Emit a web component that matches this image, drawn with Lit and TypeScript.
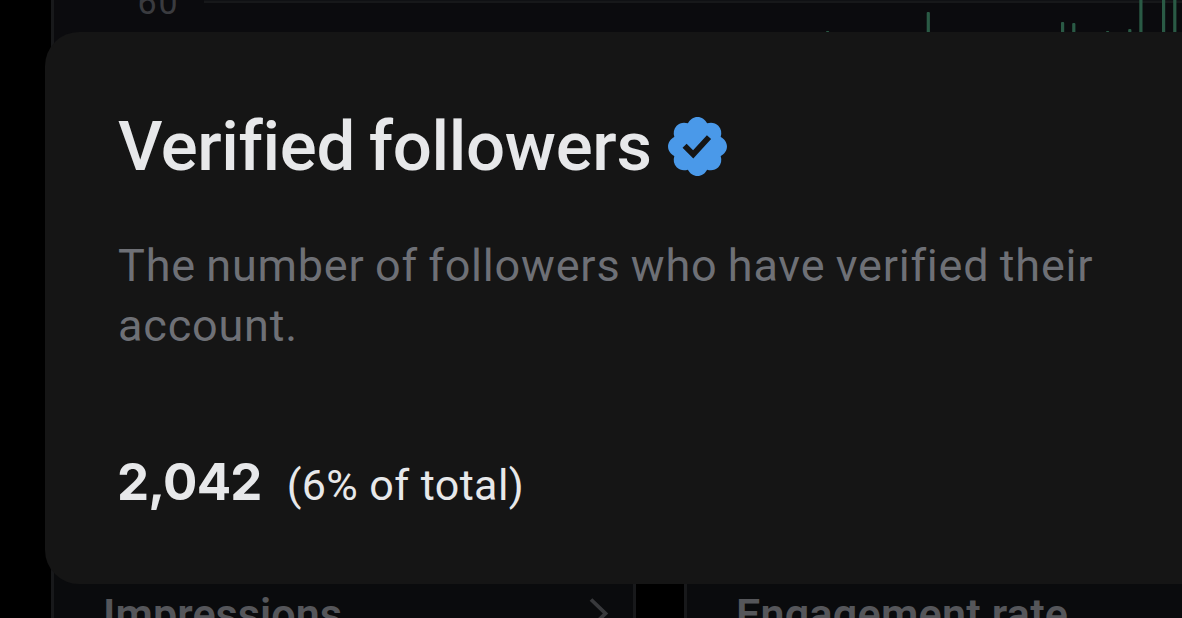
// ====== Verified Followers Card ======
// Metric explainer that sits above the dimmed analytics dashboard.

import { LitElement, html, svg, css } from 'lit';
import { customElement, property } from 'lit/decorators.js';

// x position and top of each column in the daily chart
const BARS = [
  { x: 826, top: 31 },
  { x: 926.7, top: 12 },
  { x: 1061, top: 22 },
  { x: 1072.2, top: 23 },
  { x: 1106, top: 31 },
  { x: 1128.2, top: 29 },
  { x: 1139.3, top: -2 },
  { x: 1162, top: -2 },
  { x: 1173.2, top: -2 },
];

@customElement('metric-tile')
export class MetricTile extends LitElement {
  static styles = css`
    :host {
      display: flex;
      justify-content: space-between;
      box-sizing: border-box;
      border: 3px solid #18191b;
      border-top: 0;
      border-bottom: 0;
      background: #0a0b0d;
      padding: 31px 24px 0 49px;
    }
    .label {
      font-size: 43px;
      font-weight: 600;
      line-height: 50px;
      color: #55565a;
      white-space: nowrap;
      letter-spacing: var(--label-spacing, 0.1px);
    }
    .chevron { width: 20px; height: 32px; margin-top: 9px; }
  `;

  @property({ type: String }) label = '';

  render() {
    return html`
      <span class="label">${this.label}</span>
      <svg class="chevron" viewBox="0 0 20 32" fill="none" stroke="#38393c" stroke-width="3.8">
        <path d="M2 1.5 16.5 15.5 2 29.5" />
      </svg>
    `;
  }
}

@customElement('app-root')
export class AppRoot extends LitElement {
  static styles = css`
    :host {
      display: block;
      position: relative;
      width: 1182px;
      height: 618px;
      overflow: hidden;
      background: #000;
      font-family: Roboto, "Liberation Sans", sans-serif;
    }
    .dashboard {
      display: flex;
      flex-direction: column;
      justify-content: space-between;
      width: 1320px;
      height: 618px;
      box-sizing: border-box;
      padding-left: 51px;
    }
    .chart {
      height: 300px;
      border-left: 3px solid #18191b;
      background: #0b0b0e;
    }
    .chart svg { display: block; }
    .tiles {
      display: grid;
      grid-template-columns: 585px 585px;
      column-gap: 48px;
      height: 60px;
    }
    .wide { --label-spacing: 0.25px; }
    .card {
      position: absolute;
      left: 45px;
      top: 32px;
      width: 1200px;
      height: 552px;
      box-sizing: border-box;
      padding: 74px 73px 0;
      border-radius: 34px;
      background: #151515;
      color: #e7e8ea;
    }
    .title {
      display: flex;
      align-items: center;
      gap: 11px;
      height: 80px;
      margin: 0;
      font-size: 69px;
      font-weight: 500;
      letter-spacing: -0.35px;
      word-spacing: -3px;
      white-space: nowrap;
    }
    .badge { width: 69px; height: 69px; }
    .about {
      margin: 50px 0 0;
      width: 1010px;
      font-size: 45px;
      line-height: 60px;
      letter-spacing: 0.8px;
      word-spacing: -1.6px;
      color: #6e7076;
    }
    .stat {
      display: flex;
      align-items: baseline;
      gap: 25px;
      margin: 91px 0 0 -1px;
      line-height: 70px;
    }
    .count {
      font-family: Inter, Roboto, sans-serif;
      font-size: 51px;
      font-weight: 700;
      letter-spacing: -0.8px;
    }
    .share { font-size: 43px; letter-spacing: 0.4px; }
  `;

  render() {
    return html`
      <div class="dashboard">
        <div class="chart">
          <svg width="1128" height="40" viewBox="54 0 1128 40">
            <text x="137.5" y="14" font-size="34" letter-spacing="2" fill="#3a3b3f">60</text>
            <rect x="204" y="0.5" width="978" height="2.5" fill="#17181a" />
            ${BARS.map(b => svg`<rect x=${b.x} y=${b.top} width="3.2" height=${40 - b.top} rx="1" fill="#2a5a45" />`)}
          </svg>
        </div>
        <div class="tiles">
          <metric-tile label="Impressions"></metric-tile>
          <metric-tile class="wide" label="Engagement rate"></metric-tile>
        </div>
      </div>
      <div class="card">
        <h1 class="title">
          <span>Verified followers</span>
          <svg class="badge" viewBox="0 0 24 24" fill="#4a99e9">
            <path d="M22.25 12c0-1.43-.88-2.67-2.19-3.34.46-1.39.2-2.9-.81-3.91s-2.52-1.27-3.91-.81c-.66-1.31-1.91-2.19-3.34-2.19s-2.67.88-3.33 2.19c-1.4-.46-2.91-.2-3.92.81s-1.26 2.52-.8 3.91c-1.31.67-2.2 1.91-2.2 3.34s.89 2.67 2.2 3.34c-.46 1.39-.21 2.9.8 3.91s2.52 1.26 3.91.81c.67 1.31 1.91 2.19 3.34 2.19s2.68-.88 3.34-2.19c1.39.45 2.9.2 3.91-.81s1.27-2.52.81-3.91c1.31-.67 2.19-1.91 2.19-3.34zm-11.71 4.2L6.8 12.46l1.41-1.42 2.26 2.26 4.8-5.23 1.47 1.36-6.2 6.77z" />
          </svg>
        </h1>
        <p class="about">The number of followers who have verified their account.</p>
        <div class="stat">
          <span class="count">2,042</span>
          <span class="share">(6% of total)</span>
        </div>
      </div>
    `;
  }
}
